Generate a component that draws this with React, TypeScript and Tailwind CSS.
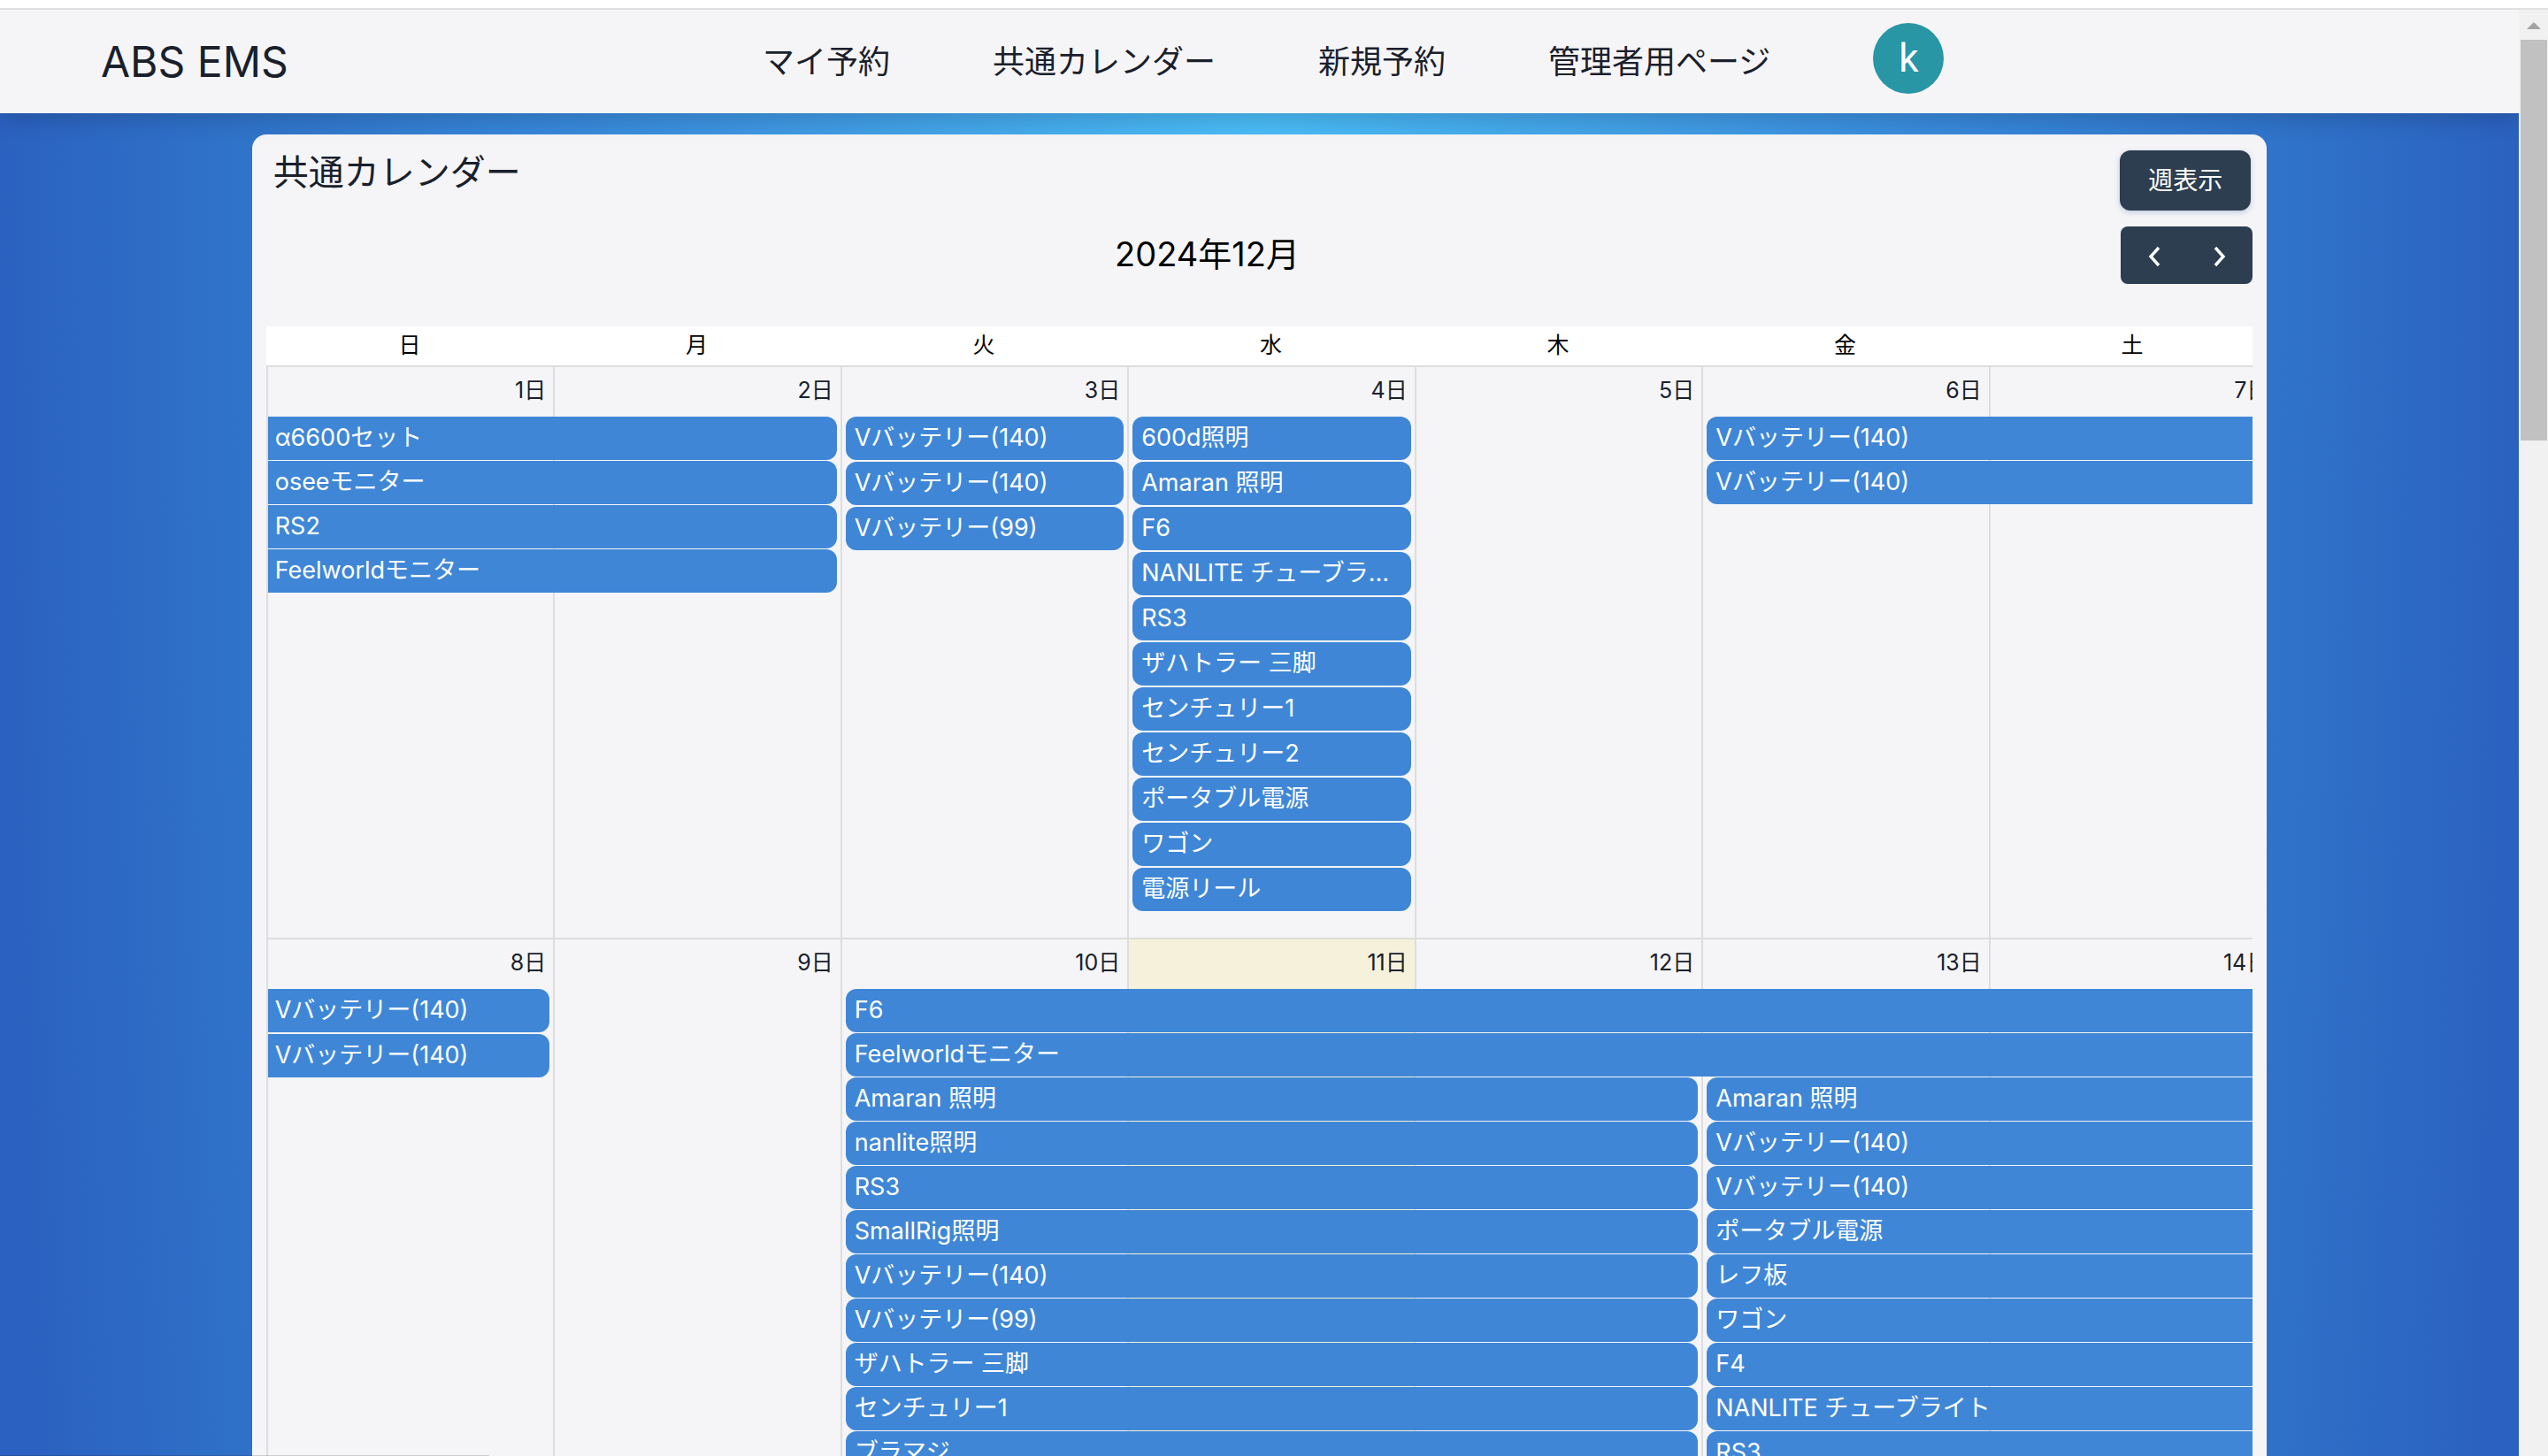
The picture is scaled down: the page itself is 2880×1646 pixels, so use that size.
const fontStack = "font-['Inter','Noto_Sans_CJK_JP',sans-serif]";

const navItems = ["マイ予約", "共通カレンダー", "新規予約", "管理者用ページ"];
const weekdays = ["日", "月", "火", "水", "木", "金", "土"];

type Group = { place: string; gap: string; titles: string[]; fromPrev?: boolean };
type Week = { days: number[]; today?: number; height: string; groups: Group[] };

const weeks: Week[] = [
  {
    days: [1, 2, 3, 4, 5, 6, 7],
    height: "min-h-[647px]",
    groups: [
      { place: "col-start-1 col-span-2", gap: "gap-px", fromPrev: true, titles: ["α6600セット", "oseeモニター", "RS2", "Feelworldモニター"] },
      { place: "col-start-3 col-span-1", gap: "gap-0.5", titles: ["Vバッテリー(140)", "Vバッテリー(140)", "Vバッテリー(99)"] },
      {
        place: "col-start-4 col-span-1",
        gap: "gap-0.5",
        titles: ["600d照明", "Amaran 照明", "F6", "NANLITE チューブライト", "RS3", "ザハトラー 三脚", "センチュリー1", "センチュリー2", "ポータブル電源", "ワゴン", "電源リール"],
      },
      { place: "col-start-6 col-span-2", gap: "gap-px", titles: ["Vバッテリー(140)", "Vバッテリー(140)"] },
    ],
  },
  {
    days: [8, 9, 10, 11, 12, 13, 14],
    today: 11,
    height: "min-h-[647px]",
    groups: [
      { place: "col-start-1 col-span-1 row-start-1 row-span-2", gap: "gap-0.5", fromPrev: true, titles: ["Vバッテリー(140)", "Vバッテリー(140)"] },
      { place: "col-start-3 col-span-5 row-start-1", gap: "gap-px", titles: ["F6", "Feelworldモニター"] },
      {
        place: "col-start-3 col-span-3 row-start-2",
        gap: "gap-px",
        titles: ["Amaran 照明", "nanlite照明", "RS3", "SmallRig照明", "Vバッテリー(140)", "Vバッテリー(99)", "ザハトラー 三脚", "センチュリー1", "ブラマジ"],
      },
      {
        place: "col-start-6 col-span-2 row-start-2",
        gap: "gap-px",
        titles: ["Amaran 照明", "Vバッテリー(140)", "Vバッテリー(140)", "ポータブル電源", "レフ板", "ワゴン", "F4", "NANLITE チューブライト", "RS3"],
      },
    ],
  },
];

function EventGroup({ group }: { group: Group }) {
  return (
    <div className={`flex min-w-0 flex-col ${group.gap} ${group.place} ${group.fromPrev ? "pr-1 pl-0.5" : "pr-1 pl-1.5"}`}>
      {group.titles.map((title, i) => (
        <a
          key={i}
          href="#event"
          className={`block h-[49px] truncate bg-[#3f87d6] text-[27px] leading-[48px] text-white ${
            group.fromPrev ? "rounded-r-xl pr-2.5 pl-2" : "rounded-xl px-2.5"
          }`}
        >
          {title}
        </a>
      ))}
    </div>
  );
}

function WeekRow({ week }: { week: Week }) {
  return (
    <div role="row" className={`grid border-t-2 border-[#dddddd] ${week.height}`}>
      <div className="col-start-1 row-start-1 grid grid-cols-7">
        {week.days.map((day) => (
          <div
            key={day}
            role="gridcell"
            className={`border-l-2 border-[#dddddd] pt-1 pr-2 text-right text-[25px] leading-[44px] text-[#1a202c] ${
              day === week.today ? "bg-[#f6f1da]" : ""
            }`}
          >
            {day}日
          </div>
        ))}
      </div>
      <div className="col-start-1 row-start-1 grid grid-cols-7 content-start gap-y-px pt-14">
        {week.groups.map((group, i) => (
          <EventGroup key={i} group={group} />
        ))}
      </div>
    </div>
  );
}

function Header() {
  return (
    <header className="relative flex h-[117px] shrink-0 items-center bg-[#f5f5f7] pl-[114px] text-[#1a202c] shadow-[0_8px_24px_rgba(0,0,0,0.16)]">
      <a href="#home" className="w-[748px] text-5xl leading-none">
        ABS EMS
      </a>
      <nav className="flex items-center gap-[116px]">
        {navItems.map((item) => (
          <a key={item} href="#nav" className="text-4xl whitespace-nowrap">
            {item}
          </a>
        ))}
        <button
          type="button"
          className="mb-2 flex size-20 items-center justify-center rounded-full bg-[#2896a5] font-['Roboto',sans-serif] text-[44px] leading-none text-white"
        >
          k
        </button>
      </nav>
    </header>
  );
}

function Chevron({ d }: { d: string }) {
  return (
    <svg viewBox="0 0 14 24" className="h-6 w-3.5" fill="none" stroke="currentColor" strokeWidth="3.4">
      <path d={d} />
    </svg>
  );
}

function Calendar() {
  return (
    <section className="mx-[10%] mt-6 flex flex-col rounded-t-2xl bg-[#f5f5f7] px-4 pb-4">
      <div className="flex items-start justify-between pt-[18px]">
        <h1 className="pl-2 text-[40px] leading-[50px] text-[#1a202c]">共通カレンダー</h1>
        <button
          type="button"
          className="mr-0.5 h-[68px] rounded-xl bg-[#2c3e50] px-8 text-[28px] text-white shadow-[0_2px_6px_rgba(60,100,180,0.3)]"
        >
          週表示
        </button>
      </div>
      <div className="mt-[18px] grid grid-cols-[149px_1fr_149px] items-center">
        <h2 className="col-start-2 pr-[118px] pb-1 text-center text-[38px] leading-none text-black">2024年12月</h2>
        <div className="flex overflow-hidden rounded-lg bg-[#2c3e50] text-white">
          <button type="button" aria-label="前月" className="flex h-[65px] flex-1 items-center justify-center pt-0.5">
            <Chevron d="M12 2 3 12l9 10" />
          </button>
          <button type="button" aria-label="翌月" className="flex h-[65px] flex-1 items-center justify-center pt-0.5">
            <Chevron d="M2 2l9 10-9 10" />
          </button>
        </div>
      </div>
      <div role="grid" aria-label="2024年12月" className="mt-12 overflow-hidden">
        <div className="w-[calc(100%+26px)]">
          <div role="row" className="grid h-11 grid-cols-7 bg-white text-center text-[25px] leading-[42px] text-black">
            {weekdays.map((day) => (
              <div key={day} role="columnheader">
                {day}
              </div>
            ))}
          </div>
          {weeks.map((week, i) => (
            <WeekRow key={i} week={week} />
          ))}
        </div>
      </div>
    </section>
  );
}

export default function App() {
  return (
    <div lang="ja" className={`relative flex h-screen flex-col overflow-hidden bg-white ${fontStack}`}>
      <div className="h-[11px] shrink-0 border-b-2 border-[#e0e0e0]" />
      <div className="flex min-h-0 flex-1">
        <div className="flex min-w-0 flex-1 flex-col overflow-hidden bg-[radial-gradient(ellipse_2014px_9000px_at_50%_117px,#4abdf7_0%,#42a0e7_21%,#3787da_40%,#3075cb_56%,#2b61c0_71%)]">
          <Header />
          <Calendar />
        </div>
        <div aria-hidden="true" className="flex w-[33px] shrink-0 flex-col items-center bg-[#f1f1f1] pt-3.5">
          <svg viewBox="0 0 16 8" className="h-2 w-4" fill="#a3a3a3">
            <path d="M8 0l8 8H0z" />
          </svg>
          <div className="mt-3 h-[453px] w-[30px] bg-[#c1c1c1]" />
        </div>
      </div>
      <div aria-hidden="true" className="absolute bottom-0 left-0 h-px w-[553px] bg-black/15" />
    </div>
  );
}
